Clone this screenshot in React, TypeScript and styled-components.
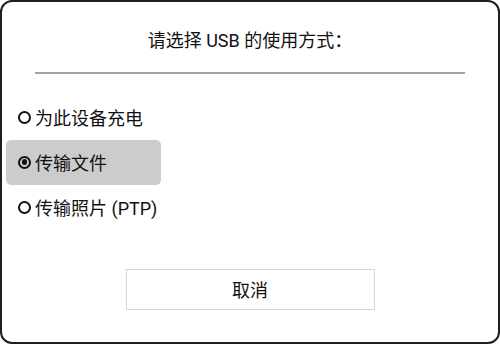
import React, { FC, useState } from 'react';
import styled, { createGlobalStyle } from 'styled-components';

const GlobalStyle = createGlobalStyle`
  html, body {
    margin: 0;
    padding: 0;
    background: #ffffff;
  }
  body {
    font-family: Roboto, "Noto Sans CJK SC", sans-serif;
    color: #111111;
  }
`;

const options = ['为此设备充电', '传输文件', '传输照片 (PTP)'];

const App: FC = () => {
  const [selected, setSelected] = useState(1);

  return (
    <>
      <GlobalStyle />
      <DialogStyled>
        <TitleStyled>请选择 USB 的使用方式：</TitleStyled>
        <DividerStyled />
        <OptionListStyled>
          {options.map((label, i) => (
            <OptionRowStyled
              key={label}
              $active={i === selected}
              onClick={() => setSelected(i)}
            >
              <RadioStyled $checked={i === selected} />
              <span>{label}</span>
            </OptionRowStyled>
          ))}
        </OptionListStyled>
        <ButtonRowStyled>
          <CancelButtonStyled>取消</CancelButtonStyled>
        </ButtonRowStyled>
      </DialogStyled>
    </>
  );
};

export default App;

const DialogStyled = styled.div`
  width: 500px;
  height: 344px;
  box-sizing: border-box;
  border: 2px solid #1e1e1e;
  border-radius: 12px;
  display: flex;
  flex-direction: column;
  overflow: hidden;
`;

const TitleStyled = styled.div`
  margin-top: 27px;
  height: 24px;
  line-height: 24px;
  font-size: 18px;
  text-align: center;
`;

const DividerStyled = styled.div`
  margin: 19px 33px 0 33px;
  height: 1.5px;
  background: #a4a4a4;
`;

const OptionListStyled = styled.div`
  margin-top: 21px;
  display: flex;
  flex-direction: column;
  padding-left: 4px;
`;

const OptionRowStyled = styled.div<{ $active: boolean }>`
  width: 155px;
  height: 45px;
  box-sizing: border-box;
  padding-left: 12px;
  display: flex;
  align-items: center;
  gap: 4px;
  font-size: 18px;
  border-radius: 5px;
  background: ${(p) => (p.$active ? '#cccccc' : 'transparent')};
  white-space: nowrap;
  cursor: pointer;
`;

const RadioStyled = styled.span<{ $checked: boolean }>`
  width: 13px;
  height: 13px;
  box-sizing: border-box;
  border: 2.2px solid #111111;
  border-radius: 50%;
  display: inline-flex;
  align-items: center;
  justify-content: center;
  flex-shrink: 0;
  &::after {
    content: '';
    width: 5.5px;
    height: 5.5px;
    border-radius: 50%;
    background: #111111;
    display: ${(p) => (p.$checked ? 'block' : 'none')};
  }
`;

const ButtonRowStyled = styled.div`
  margin-top: 39px;
  display: flex;
  justify-content: center;
`;

const CancelButtonStyled = styled.button`
  width: 249px;
  height: 41px;
  border: 1px solid #d6d6d6;
  background: #ffffff;
  font-family: Roboto, "Noto Sans CJK SC", sans-serif;
  font-size: 18px;
  color: #111111;
  padding: 0;
  cursor: pointer;
`;
